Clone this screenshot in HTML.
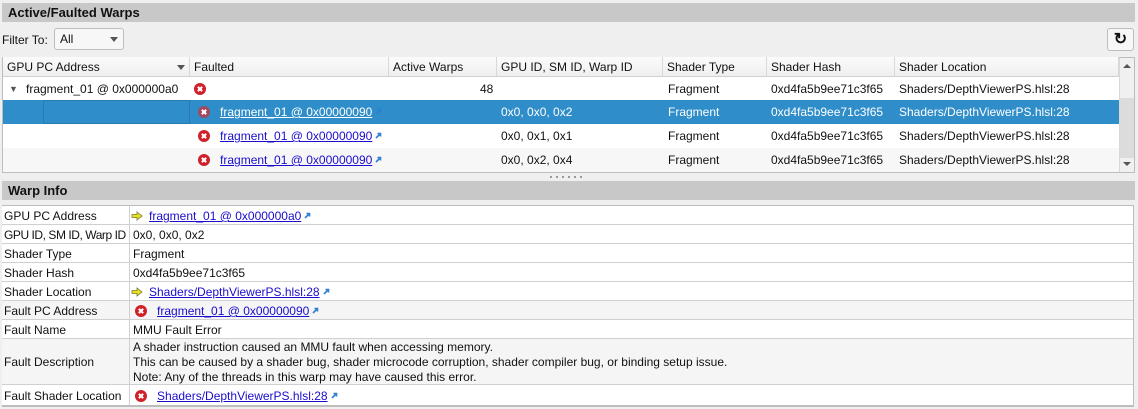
<!DOCTYPE html>
<html><head><style>
*{margin:0;padding:0;box-sizing:border-box}
body{width:1138px;height:409px;background:#efefef;font-family:"Liberation Sans",sans-serif;font-size:12px;color:#111;position:relative;overflow:hidden}
.a{position:absolute;white-space:nowrap}
.bar{position:absolute;left:2px;right:3px;background:#c8c8c8;font-weight:bold;font-size:13px;padding-left:6px}
a{color:#1a0dcc;text-decoration:underline}
.x{display:inline-block;width:12px;height:12px;border-radius:50%;background:#d0202a;vertical-align:middle;position:relative;top:-1px;overflow:hidden}
.x:before,.x:after{content:"";position:absolute;left:5px;top:3px;width:2px;height:6px;background:#fff;transform:rotate(45deg)}
.x:after{transform:rotate(-45deg)}
.lk{display:inline-block;width:7px;height:7px;margin-left:3px;vertical-align:middle;position:relative;top:-1px}
.arr{display:inline-block;width:12px;height:10px;margin-right:6px;vertical-align:middle;position:relative;top:-1px}
.cell{position:absolute;height:24px;line-height:24px}
.hd{position:absolute;top:57px;height:20px;line-height:20px;padding-left:4px;border-right:1px solid #d8d8d8;background:linear-gradient(#fbfbfb,#efefef);border-bottom:1px solid #d0d0d0}
.wr{position:absolute;left:2px;width:1131px;border-bottom:1px solid #d0d0d0}
.wl{position:absolute;left:4px}
.wv{position:absolute;left:131px}
</style></head><body>
<svg width="0" height="0" style="position:absolute"><defs>
<symbol id="lk" viewBox="0 0 7 7"><path d="M1 6 L5 2 M2.5 1.5 H5.5 V4.5" stroke="#2f7fd0" stroke-width="1.6" fill="none"/></symbol>
<symbol id="ar" viewBox="0 0 12 10"><path d="M1 3.5 H6 V1 L11 5 L6 9 V6.5 H1 Z" fill="#e8e020" stroke="#7a7a30" stroke-width="0.8"/></symbol>
</defs></svg>
<div class="bar" style="top:3px;height:19px;line-height:19px">Active/Faulted Warps</div>
<div class="a" style="left:2px;top:33px">Filter To:</div>
<div class="a" style="left:54px;top:28px;width:70px;height:22px;border:1px solid #bdbdbd;border-radius:3px;background:#f7f7f7;padding-left:5px;line-height:20px">All<span style="position:absolute;left:55px;top:8px;border:4px solid transparent;border-top:5px solid #555"></span></div>
<div class="a" style="left:1107px;top:28px;width:27px;height:23px;border:1px solid #bdbdbd;border-radius:3px;background:#f7f7f7;text-align:center;line-height:21px;font-size:16px;font-weight:bold">↻</div>
<div class="a" style="left:2px;top:57px;width:1133px;height:116px;background:#fff;border:1px solid #bdbdbd"></div>
<div class="hd" style="left:3px;width:187px">GPU PC Address<span style="position:absolute;left:174px;top:8px;border:4px solid transparent;border-top:5px solid #555"></span></div>
<div class="hd" style="left:190px;width:199px">Faulted</div>
<div class="hd" style="left:389px;width:108px">Active Warps</div>
<div class="hd" style="left:497px;width:166px">GPU ID, SM ID, Warp ID</div>
<div class="hd" style="left:663px;width:104px">Shader Type</div>
<div class="hd" style="left:767px;width:128px">Shader Hash</div>
<div class="hd" style="left:895px;width:224px">Shader Location</div>
<div class="a" style="left:1119px;top:58px;width:15px;height:114px;background:#f0f0f0;border-left:1px solid #d8d8d8"><span style="position:absolute;left:3px;top:6px;border:4px solid transparent;border-bottom:4px solid #555;border-top:0"></span><span style="position:absolute;left:3px;bottom:6px;border:4px solid transparent;border-top:4px solid #555;border-bottom:0"></span><div style="position:absolute;left:0;top:40px;width:14px;height:60px;background:#dcdcdc"></div></div>
<div class="a" style="left:3px;top:100px;width:1116px;height:24px;background:#2f8dc9"></div>
<div class="a" style="left:43px;top:100px;width:147px;height:24px;border:1px solid #2a7ab0"></div>
<div class="a" style="left:3px;top:148px;width:1116px;height:24px;background:#f7f7f7"></div>
<div class="cell" style="left:9px;top:77px;font-size:9px;color:#555">▼</div>
<div class="cell" style="left:26px;top:77px">fragment_01 @ 0x000000a0</div>
<div class="cell" style="left:194px;top:77px"><span class="x"></span></div>
<div class="cell" style="left:480px;top:77px">48</div>
<div class="cell" style="left:668px;top:77px">Fragment</div>
<div class="cell" style="left:771px;top:77px">0xd4fa5b9ee71c3f65</div>
<div class="cell" style="left:899px;top:77px">Shaders/DepthViewerPS.hlsl:28</div>
<div class="cell" style="left:198px;top:100px;color:#fff"><span class="x" style="background:#a04a60"></span>&nbsp;&nbsp; <span style="text-decoration:underline">fragment_01 @ 0x00000090</span><svg class="lk"><use href="#lk"/></svg></div>
<div class="cell" style="left:501px;top:100px;color:#fff">0x0, 0x0, 0x2</div>
<div class="cell" style="left:668px;top:100px;color:#fff">Fragment</div>
<div class="cell" style="left:771px;top:100px;color:#fff">0xd4fa5b9ee71c3f65</div>
<div class="cell" style="left:899px;top:100px;color:#fff">Shaders/DepthViewerPS.hlsl:28</div>
<div class="cell" style="left:198px;top:124px"><span class="x"></span>&nbsp;&nbsp; <a>fragment_01 @ 0x00000090</a><svg class="lk"><use href="#lk"/></svg></div>
<div class="cell" style="left:501px;top:124px">0x0, 0x1, 0x1</div>
<div class="cell" style="left:668px;top:124px">Fragment</div>
<div class="cell" style="left:771px;top:124px">0xd4fa5b9ee71c3f65</div>
<div class="cell" style="left:899px;top:124px">Shaders/DepthViewerPS.hlsl:28</div>
<div class="cell" style="left:198px;top:148px"><span class="x"></span>&nbsp;&nbsp; <a>fragment_01 @ 0x00000090</a><svg class="lk"><use href="#lk"/></svg></div>
<div class="cell" style="left:501px;top:148px">0x0, 0x2, 0x4</div>
<div class="cell" style="left:668px;top:148px">Fragment</div>
<div class="cell" style="left:771px;top:148px">0xd4fa5b9ee71c3f65</div>
<div class="cell" style="left:899px;top:148px">Shaders/DepthViewerPS.hlsl:28</div>
<div class="a" style="left:550px;top:176px;width:36px;height:2px;background:repeating-linear-gradient(90deg,#999 0 2px,transparent 2px 6px)"></div>
<div class="bar" style="top:181px;height:19px;line-height:19px">Warp Info</div>
<div class="a" style="left:2px;top:205px;width:1132px;height:202px;background:#fff;border:1px solid #bdbdbd;border-bottom-width:2px"></div>
<div class="wr" style="top:206px;height:19px;background:#fff"></div>
<div class="wr" style="top:225px;height:19px;background:#fff"></div>
<div class="wr" style="top:244px;height:19px;background:#fff"></div>
<div class="wr" style="top:263px;height:19px;background:#fff"></div>
<div class="wr" style="top:282px;height:19px;background:#fff"></div>
<div class="wr" style="top:301px;height:19px;background:#f5f5f5"></div>
<div class="wr" style="top:320px;height:19px;background:#fff"></div>
<div class="wr" style="top:339px;height:46px;background:#f5f5f5"></div>
<div class="wr" style="top:385px;height:20px;background:#fff;border-bottom:none"></div>
<div class="a" style="left:129px;top:206px;width:1px;height:199px;background:#d0d0d0"></div>
<div class="a wl" style="top:209px">GPU PC Address</div>
<div class="a wv" style="top:209px"><svg class="arr"><use href="#ar"/></svg><a>fragment_01 @ 0x000000a0</a><svg class="lk"><use href="#lk"/></svg></div>
<div class="a wl" style="top:228px;letter-spacing:-0.45px">GPU ID, SM ID, Warp ID</div>
<div class="a wv" style="top:228px;left:133px">0x0, 0x0, 0x2</div>
<div class="a wl" style="top:247px">Shader Type</div>
<div class="a wv" style="top:247px;left:133px">Fragment</div>
<div class="a wl" style="top:266px">Shader Hash</div>
<div class="a wv" style="top:266px;left:133px">0xd4fa5b9ee71c3f65</div>
<div class="a wl" style="top:285px">Shader Location</div>
<div class="a wv" style="top:285px"><svg class="arr"><use href="#ar"/></svg><a>Shaders/DepthViewerPS.hlsl:28</a><svg class="lk"><use href="#lk"/></svg></div>
<div class="a wl" style="top:304px">Fault PC Address</div>
<div class="a wv" style="top:304px;left:135px"><span class="x"></span>&nbsp;&nbsp; <a>fragment_01 @ 0x00000090</a><svg class="lk"><use href="#lk"/></svg></div>
<div class="a wl" style="top:323px">Fault Name</div>
<div class="a wv" style="top:323px;left:133px">MMU Fault Error</div>
<div class="a wl" style="top:355px">Fault Description</div>
<div class="a wv" style="top:340px;left:133px;line-height:15px">A shader instruction caused an MMU fault when accessing memory.<br>This can be caused by a shader bug, shader microcode corruption, shader compiler bug, or binding setup issue.<br>Note: Any of the threads in this warp may have caused this error.</div>
<div class="a wl" style="top:389px">Fault Shader Location</div>
<div class="a wv" style="top:389px;left:135px"><span class="x"></span>&nbsp;&nbsp; <a>Shaders/DepthViewerPS.hlsl:28</a><svg class="lk"><use href="#lk"/></svg></div>
</body></html>
